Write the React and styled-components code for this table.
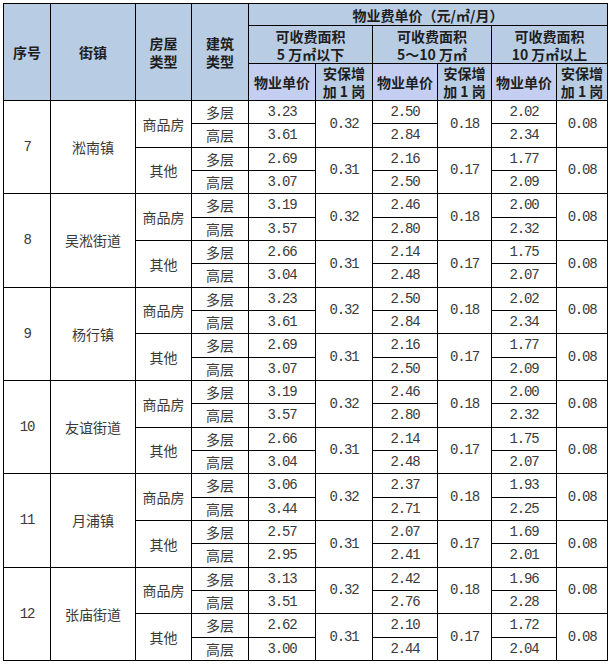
import React from "react";
import styled, { createGlobalStyle } from "styled-components";

const Global = createGlobalStyle`
  html, body { margin: 0; padding: 0; background: #fff; }
  body { font-family: "Noto Sans CJK SC", sans-serif; }
`;

const Page = styled.div`
  padding: 3px;
  width: 604px;
`;

const Table = styled.table`
  border-collapse: collapse;
  table-layout: fixed;
  width: 604px;
  border: 1px solid #000;
`;

const HeadRow = styled.tr`
  height: ${(p) => p.$h}px;
`;

const BodyRow = styled.tr`
  height: 23.333px;
`;

const HeadCell = styled.th`
  border: 1px solid #000;
  background: ${(p) => (p.$sub ? "#c3cef0" : "#b8cce4")};
  font-family: "Noto Sans CJK SC", sans-serif;
  font-weight: 700;
  font-size: 14px;
  line-height: 18px;
  color: #1e1e1e;
  text-align: center;
  vertical-align: middle;
  padding: 0;
  white-space: pre-line;
`;

const Cell = styled.td`
  border: 1px solid #000;
  font-family: ${(p) =>
    p.$num
      ? `"Liberation Mono", "Noto Sans CJK SC", monospace`
      : `"Noto Sans CJK SC", sans-serif`};
  font-size: 14px;
  letter-spacing: ${(p) => (p.$num ? "-1.2px" : "0")};
  font-weight: 400;
  color: #3a3a3a;
  text-align: center;
  vertical-align: middle;
  padding: 0;
  line-height: 16px;
`;

const cols = [47, 85, 56, 57, 67, 57, 65, 54, 65, 51];

const groups = [
  { id: "7", name: "淞南镇", a: [["3.23", "3.61"], "0.32", ["2.50", "2.84"], "0.18", ["2.02", "2.34"], "0.08"], b: [["2.69", "3.07"], "0.31", ["2.16", "2.50"], "0.17", ["1.77", "2.09"], "0.08"] },
  { id: "8", name: "吴淞街道", a: [["3.19", "3.57"], "0.32", ["2.46", "2.80"], "0.18", ["2.00", "2.32"], "0.08"], b: [["2.66", "3.04"], "0.31", ["2.14", "2.48"], "0.17", ["1.75", "2.07"], "0.08"] },
  { id: "9", name: "杨行镇", a: [["3.23", "3.61"], "0.32", ["2.50", "2.84"], "0.18", ["2.02", "2.34"], "0.08"], b: [["2.69", "3.07"], "0.31", ["2.16", "2.50"], "0.17", ["1.77", "2.09"], "0.08"] },
  { id: "10", name: "友谊街道", a: [["3.19", "3.57"], "0.32", ["2.46", "2.80"], "0.18", ["2.00", "2.32"], "0.08"], b: [["2.66", "3.04"], "0.31", ["2.14", "2.48"], "0.17", ["1.75", "2.07"], "0.08"] },
  { id: "11", name: "月浦镇", a: [["3.06", "3.44"], "0.32", ["2.37", "2.71"], "0.18", ["1.93", "2.25"], "0.08"], b: [["2.57", "2.95"], "0.31", ["2.07", "2.41"], "0.17", ["1.69", "2.01"], "0.08"] },
  { id: "12", name: "张庙街道", a: [["3.13", "3.51"], "0.32", ["2.42", "2.76"], "0.18", ["1.96", "2.28"], "0.08"], b: [["2.62", "3.00"], "0.31", ["2.10", "2.44"], "0.17", ["1.72", "2.04"], "0.08"] },
];

function TypeRows({ g, label, d, first }) {
  return (
    <>
      <BodyRow>
        {first && (
          <>
            <Cell $num rowSpan={4}>{g.id}</Cell>
            <Cell rowSpan={4}>{g.name}</Cell>
          </>
        )}
        <Cell rowSpan={2}>{label}</Cell>
        <Cell>多层</Cell>
        <Cell $num>{d[0][0]}</Cell>
        <Cell $num rowSpan={2}>{d[1]}</Cell>
        <Cell $num>{d[2][0]}</Cell>
        <Cell $num rowSpan={2}>{d[3]}</Cell>
        <Cell $num>{d[4][0]}</Cell>
        <Cell $num rowSpan={2}>{d[5]}</Cell>
      </BodyRow>
      <BodyRow>
        <Cell>高层</Cell>
        <Cell $num>{d[0][1]}</Cell>
        <Cell $num>{d[2][1]}</Cell>
        <Cell $num>{d[4][1]}</Cell>
      </BodyRow>
    </>
  );
}

export default function App() {
  return (
    <Page>
      <Global />
      <Table>
        <colgroup>
          {cols.map((w, i) => (
            <col key={i} style={{ width: w }} />
          ))}
        </colgroup>
        <thead>
          <HeadRow $h={22}>
            <HeadCell rowSpan={3}>序号</HeadCell>
            <HeadCell rowSpan={3}>街镇</HeadCell>
            <HeadCell rowSpan={3}>{"房屋\n类型"}</HeadCell>
            <HeadCell rowSpan={3}>{"建筑\n类型"}</HeadCell>
            <HeadCell colSpan={6}>物业费单价（元/㎡/月）</HeadCell>
          </HeadRow>
          <HeadRow $h={38}>
            <HeadCell colSpan={2}>{"可收费面积\n5 万㎡以下"}</HeadCell>
            <HeadCell colSpan={2}>{"可收费面积\n5～10 万㎡"}</HeadCell>
            <HeadCell colSpan={2}>{"可收费面积\n10 万㎡以上"}</HeadCell>
          </HeadRow>
          <HeadRow $h={37}>
            <HeadCell $sub>物业单价</HeadCell>
            <HeadCell>{"安保增\n加 1 岗"}</HeadCell>
            <HeadCell $sub>物业单价</HeadCell>
            <HeadCell>{"安保增\n加 1 岗"}</HeadCell>
            <HeadCell $sub>物业单价</HeadCell>
            <HeadCell>{"安保增\n加 1 岗"}</HeadCell>
          </HeadRow>
        </thead>
        <tbody>
          {groups.map((g) => (
            <React.Fragment key={g.id}>
              <TypeRows g={g} label="商品房" d={g.a} first />
              <TypeRows g={g} label="其他" d={g.b} />
            </React.Fragment>
          ))}
        </tbody>
      </Table>
    </Page>
  );
}
